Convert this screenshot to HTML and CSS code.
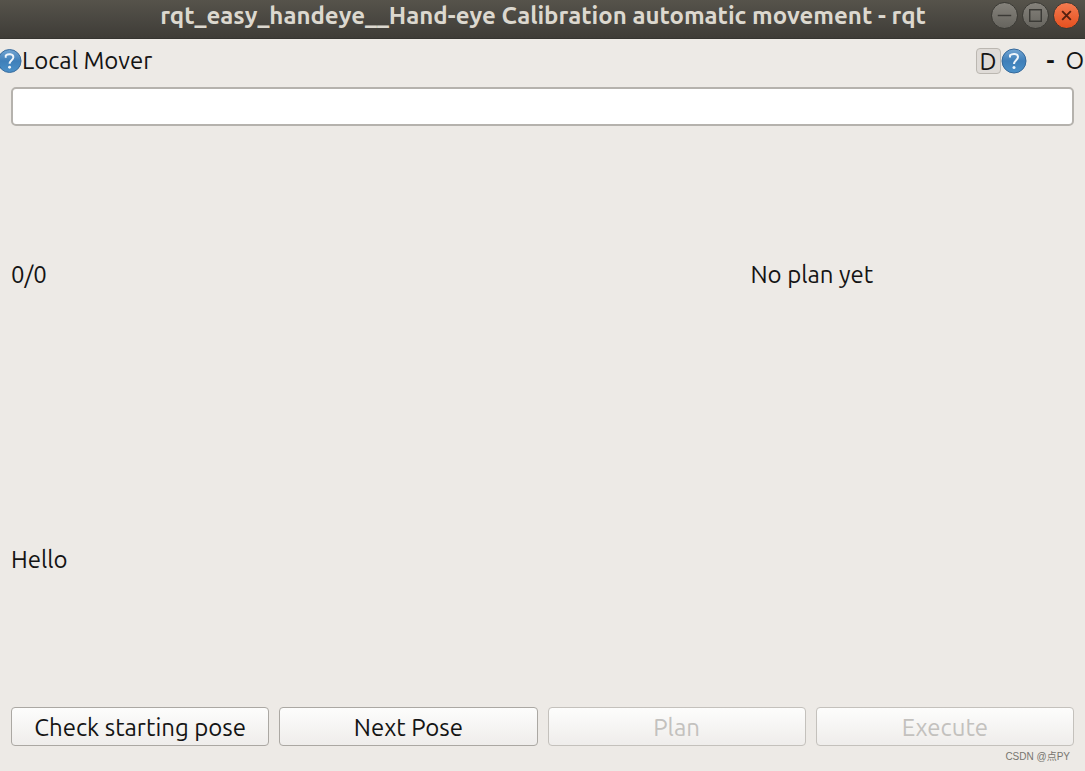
FILE: index.html
```html
<!DOCTYPE html>
<html lang="en">
	<head>
		<meta charset="utf-8">
		<title>rqt_easy_handeye__Hand-eye Calibration automatic movement - rqt</title>
		<link rel="stylesheet" href="styles.css">
	</head>
	<body>
		<svg class="defs" aria-hidden="true">
			<defs>
				<linearGradient id="blue" x1="0" y1="0" x2="0" y2="1">
					<stop offset="0" stop-color="#73a5d3"/>
					<stop offset="0.5" stop-color="#3f7fb9"/>
					<stop offset="1" stop-color="#4b91c9"/>
				</linearGradient>
				<symbol id="help" viewBox="0 0 26 26">
					<circle cx="13" cy="13" r="12" fill="url(#blue)" stroke="#34699b"/>
					<path d="M9 9.500V7.200C11 5.500 17 5 17 9C17 12 13 12.500 13 16" fill="none" stroke="#eef4fa" stroke-width="2"/>
					<circle cx="13" cy="19.500" r="1.500" fill="#eef4fa"/>
				</symbol>
			</defs>
		</svg>
		<header class="titlebar">
			<h1 class="title">rqt_easy_handeye__Hand-eye Calibration automatic movement - rqt</h1>
			<div class="controls">
				<button class="control" aria-label="Minimize">
					<svg viewBox="0 0 26 26"><path d="M6 13H20"/></svg>
				</button>
				<button class="control" aria-label="Maximize">
					<svg viewBox="0 0 26 26"><rect x="7" y="7" width="12" height="12"/></svg>
				</button>
				<button class="control close" aria-label="Close">
					<svg viewBox="0 0 26 26"><path d="M8.500 8.500L17.500 17.500M17.500 8.500L8.500 17.500"/></svg>
				</button>
			</div>
		</header>
		<div class="dockbar">
			<svg class="dock-icon" viewBox="3 0 23 26" aria-hidden="true"><use href="#help" width="26" height="26"/></svg>
			<h2 class="dock-title">Local Mover</h2>
			<button class="dock-d">D</button>
			<button class="flat" aria-label="Help"><svg class="help" viewBox="0 0 26 26"><use href="#help"/></svg></button>
			<button class="flat dash" aria-label="Minimize dock">-</button>
			<button class="flat" aria-label="Float dock">O</button>
		</div>
		<main class="panel">
			<input class="field" type="text" aria-label="Status">
			<div class="status">
				<span>0/0</span>
				<span>No plan yet</span>
			</div>
			<div class="message">Hello</div>
			<div class="buttons">
				<button class="push">Check starting pose</button>
				<button class="push">Next Pose</button>
				<button class="push" disabled>Plan</button>
				<button class="push" disabled>Execute</button>
			</div>
		</main>
		<footer class="mark">CSDN @点PY</footer>
	</body>
</html>
```
FILE: styles.css
```css
* {
	box-sizing: border-box;
}
body {
	margin: 0;
	min-height: 100vh;
	display: flex;
	flex-direction: column;
	overflow-x: hidden;
	background-color: #edeae6;
	color: #141414;
	font-family: Ubuntu, "Noto Sans", sans-serif;
	font-size: 24px;
	line-height: 30px;
}
button {
	font: inherit;
	color: inherit;
	padding: 0;
}
.defs {
	position: absolute;
	width: 0;
	height: 0;
}
.titlebar {
	display: flex;
	align-items: flex-start;
	height: 39px;
	padding-right: 5px;
	background: linear-gradient(#56534b, #3e3c37);
	border-bottom: 1px solid #353430;
}
.title {
	flex: 1;
	margin: 0;
	padding-left: 95px;
	text-align: center;
	color: #dcd8cf;
	font-size: 24px;
	font-weight: 700;
	line-height: 32px;
	white-space: nowrap;
}
.controls {
	display: flex;
	gap: 4px;
	padding-top: 2px;
}
.control {
	width: 27px;
	height: 27px;
	border: 1px solid #3a3934;
	border-radius: 50%;
	background: linear-gradient(#85827b, #66645e);
}
.control svg {
	display: block;
	width: 25px;
	height: 25px;
	fill: none;
	stroke: #3b3a36;
	stroke-width: 1.5;
}
.close {
	background: linear-gradient(#f37b50, #e6501f);
}
.close svg {
	stroke: #55200f;
	stroke-width: 2;
}
.dockbar {
	display: flex;
	align-items: center;
	height: 43px;
	padding-right: 1px;
}
.dock-icon {
	width: 22px;
	height: 26px;
}
.dock-title {
	flex: 1;
	margin: 0;
	font-size: 24px;
	font-weight: 400;
}
.dock-d {
	width: 25px;
	height: 26px;
	border: 1px solid #bbb7b1;
	border-radius: 4px;
	background-color: #dfdbd7;
	line-height: 26px;
}
.flat {
	border: 0;
	background: none;
}
.help {
	display: block;
	width: 26px;
	height: 26px;
}
.dash {
	margin: 0 11px 0 20px;
	font-weight: 700;
}
.panel {
	flex: 1;
	display: grid;
	grid-template-rows: 39px 1fr 1fr 39px;
	gap: 10px;
	padding: 5px 11px 0;
}
.field {
	width: 100%;
	padding: 0 8px;
	border: 2px solid #b5b2ad;
	border-radius: 5px;
	background-color: #fff;
	font: inherit;
}
.status {
	display: grid;
	grid-template-columns: 16fr 7fr;
	align-items: center;
	padding-top: 2px;
}
.message {
	display: flex;
	align-items: center;
	padding-top: 2px;
}
.buttons {
	display: grid;
	grid-template-columns: repeat(4, 1fr);
	gap: 10px;
}
.push {
	padding-top: 2px;
	border: 1px solid #aba8a3;
	border-radius: 4px;
	background: linear-gradient(#fdfdfc, #efedeb);
}
.push:disabled {
	border-color: #c4c1bc;
	color: #c3c1be;
}
.mark {
	height: 25px;
	padding-right: 15px;
	text-align: right;
	color: #77756f;
	font-family: "Liberation Sans", "Noto Sans CJK SC", sans-serif;
	font-size: 10px;
	line-height: 22px;
}
```
